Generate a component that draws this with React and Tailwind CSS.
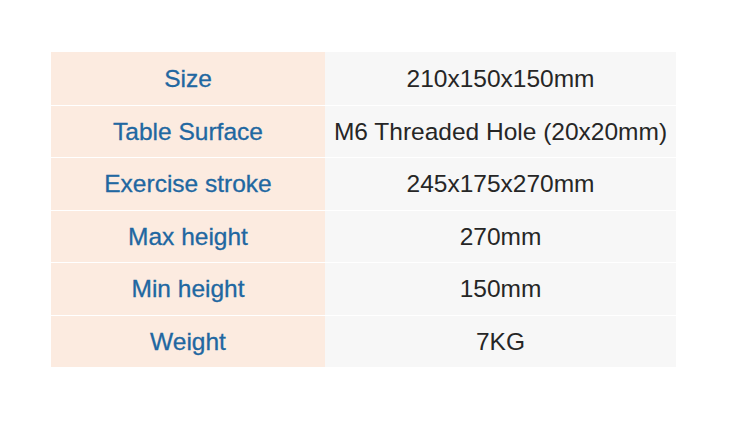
import React from "react";

const rows = [
  ["Size", "210x150x150mm"],
  ["Table Surface", "M6 Threaded Hole (20x20mm)"],
  ["Exercise stroke", "245x175x270mm"],
  ["Max height", "270mm"],
  ["Min height", "150mm"],
  ["Weight", "7KG"],
];

export default function App() {
  return (
    <div className="w-[730px] h-[431px] bg-white pt-[52px] pl-[51px]" style={{ fontFamily: '"Liberation Sans", Arial, sans-serif' }}>
      <div className="flex flex-col w-[625px]">
        {rows.map(([k, v], i) => (
          <div
            key={k}
            className={`flex h-[52.5px] ${i > 0 ? "border-t-[1.5px] border-white" : ""}`}
          >
            <div className="w-[274px] bg-[#fcebe0] flex items-center justify-center pt-[2px] text-[24.5px] text-[#2167a1] [-webkit-text-stroke:0.3px_#2167a1]">
              {k}
            </div>
            <div className="flex-1 bg-[#f7f7f7] flex items-center justify-center pt-[2px] text-[24.5px] text-[#262626]">
              {v}
            </div>
          </div>
        ))}
      </div>
    </div>
  );
}
